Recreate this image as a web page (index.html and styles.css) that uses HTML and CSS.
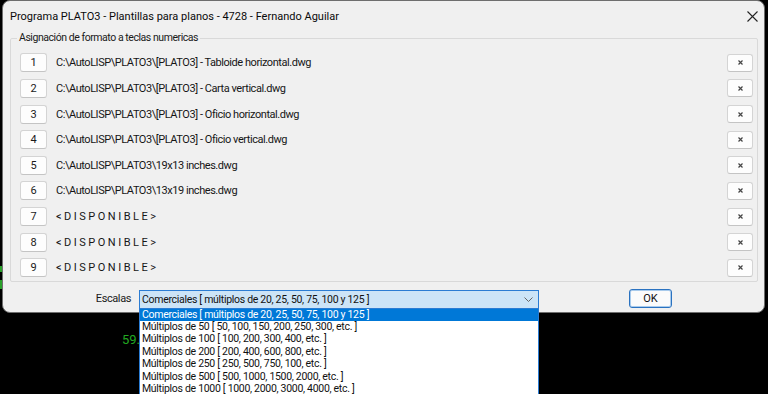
FILE: index.html
```html
<!DOCTYPE html>
<html lang="es">
<head>
<meta charset="utf-8">
<title>Programa PLATO3</title>
<link rel="stylesheet" href="styles.css">
</head>
<body>
<div class="term-bit term-bit-a"></div>
<div class="term-bit term-bit-b"></div>
<div class="term-text">59.</div>
<div class="dialog">
  <div class="titlebar">
    <span class="title">Programa PLATO3 - Plantillas para planos - 4728 - Fernando Aguilar</span>
    <svg class="close" width="11" height="11" viewBox="0 0 11 11"><path d="M0.5 0.5 L10.5 10.5 M10.5 0.5 L0.5 10.5" stroke="#222" stroke-width="1.1" fill="none"/></svg>
  </div>
  <fieldset class="group">
    <legend>Asignación de formato a teclas numericas</legend>
    <div class="rows">
      <div class="row"><span class="key">1</span><span class="path">C:\AutoLISP\PLATO3\[PLATO3] - Tabloide horizontal.dwg</span><span class="del"><svg width="5" height="5" viewBox="0 0 5 5"><path d="M0.5 0.5 L4.5 4.5 M4.5 0.5 L0.5 4.5" stroke="#444" stroke-width="1.2"/></svg></span></div>
      <div class="row"><span class="key">2</span><span class="path">C:\AutoLISP\PLATO3\[PLATO3] - Carta vertical.dwg</span><span class="del"><svg width="5" height="5" viewBox="0 0 5 5"><path d="M0.5 0.5 L4.5 4.5 M4.5 0.5 L0.5 4.5" stroke="#444" stroke-width="1.2"/></svg></span></div>
      <div class="row"><span class="key">3</span><span class="path">C:\AutoLISP\PLATO3\[PLATO3] - Oficio horizontal.dwg</span><span class="del"><svg width="5" height="5" viewBox="0 0 5 5"><path d="M0.5 0.5 L4.5 4.5 M4.5 0.5 L0.5 4.5" stroke="#444" stroke-width="1.2"/></svg></span></div>
      <div class="row"><span class="key">4</span><span class="path">C:\AutoLISP\PLATO3\[PLATO3] - Oficio vertical.dwg</span><span class="del"><svg width="5" height="5" viewBox="0 0 5 5"><path d="M0.5 0.5 L4.5 4.5 M4.5 0.5 L0.5 4.5" stroke="#444" stroke-width="1.2"/></svg></span></div>
      <div class="row"><span class="key">5</span><span class="path">C:\AutoLISP\PLATO3\19x13 inches.dwg</span><span class="del"><svg width="5" height="5" viewBox="0 0 5 5"><path d="M0.5 0.5 L4.5 4.5 M4.5 0.5 L0.5 4.5" stroke="#444" stroke-width="1.2"/></svg></span></div>
      <div class="row"><span class="key">6</span><span class="path">C:\AutoLISP\PLATO3\13x19 inches.dwg</span><span class="del"><svg width="5" height="5" viewBox="0 0 5 5"><path d="M0.5 0.5 L4.5 4.5 M4.5 0.5 L0.5 4.5" stroke="#444" stroke-width="1.2"/></svg></span></div>
      <div class="row"><span class="key">7</span><span class="path free">&lt;DISPONIBLE&gt;</span><span class="del"><svg width="5" height="5" viewBox="0 0 5 5"><path d="M0.5 0.5 L4.5 4.5 M4.5 0.5 L0.5 4.5" stroke="#444" stroke-width="1.2"/></svg></span></div>
      <div class="row"><span class="key">8</span><span class="path free">&lt;DISPONIBLE&gt;</span><span class="del"><svg width="5" height="5" viewBox="0 0 5 5"><path d="M0.5 0.5 L4.5 4.5 M4.5 0.5 L0.5 4.5" stroke="#444" stroke-width="1.2"/></svg></span></div>
      <div class="row"><span class="key">9</span><span class="path free">&lt;DISPONIBLE&gt;</span><span class="del"><svg width="5" height="5" viewBox="0 0 5 5"><path d="M0.5 0.5 L4.5 4.5 M4.5 0.5 L0.5 4.5" stroke="#444" stroke-width="1.2"/></svg></span></div>
    </div>
  </fieldset>
  <div class="footer">
    <span class="lbl">Escalas</span>
    <div class="combo">
      <div class="combo-box">
        <span class="combo-text">Comerciales [ múltiplos de 20, 25, 50, 75, 100 y 125 ]</span>
        <svg class="chev" width="9" height="5" viewBox="0 0 9 5"><path d="M0.5 0.5 L4.5 4.5 L8.5 0.5" stroke="#666" stroke-width="1" fill="none"/></svg>
      </div>
      <ul class="list">
        <li class="sel">Comerciales [ múltiplos de 20, 25, 50, 75, 100 y 125 ]</li>
        <li>Múltiplos de 50 [ 50, 100, 150, 200, 250, 300, etc. ]</li>
        <li>Múltiplos de 100 [ 100, 200, 300, 400, etc. ]</li>
        <li>Múltiplos de 200 [ 200, 400, 600, 800, etc. ]</li>
        <li>Múltiplos de 250 [ 250, 500, 750, 100, etc. ]</li>
        <li>Múltiplos de 500 [ 500, 1000, 1500, 2000, etc. ]</li>
        <li>Múltiplos de 1000 [ 1000, 2000, 3000, 4000, etc. ]</li>
      </ul>
    </div>
    <span class="ok">OK</span>
  </div>
</div>
</body>
</html>
```

FILE: styles.css
```css
* { box-sizing: border-box; }
html, body {
  margin: 0;
  padding: 0;
  width: 768px;
  height: 394px;
  overflow: hidden;
  background: #000;
  font-family: Roboto, "Liberation Sans", sans-serif;
  color: #1a1a1a;
}
body { position: relative; }

.term-text {
  position: absolute;
  left: 122px;
  top: 333px;
  font-size: 13px;
  line-height: 14px;
  color: #22a822;
}
.term-bit {
  position: absolute;
  left: 0;
  width: 2px;
  background: #2aa02a;
}
.term-bit-a { top: 266px; height: 6px; }
.term-bit-b { top: 280px; height: 9px; }

.dialog {
  position: relative;
  margin-left: 2px;
  width: 763px;
  height: 313px;
  background: #f0f0f0;
  border: 1px solid #6e6e6e;
  border-radius: 8px;
  display: flex;
  flex-direction: column;
}

.titlebar {
  height: 30px;
  display: flex;
  align-items: center;
  padding: 0 6px 0 7px;
}
.title {
  font-size: 11px;
  color: #0a0a0a;
  white-space: nowrap;
}
.close { margin-left: auto; display: block; }

.group {
  margin: 0 6px 0 7px;
  padding: 5px 4px 0 9px;
  border: 1px solid #d9d9d9;
  border-radius: 2px;
  min-width: 0;
}
.group legend {
  font-size: 10.5px;
  line-height: 14px;
  letter-spacing: -0.45px;
  padding: 0 2px;
  margin-left: -3px;
  color: #1a1a1a;
}
.rows {
  display: grid;
  grid-auto-rows: 25.625px;
}
.row {
  display: grid;
  grid-template-columns: 27px 1fr 26px;
  column-gap: 9px;
  align-items: center;
}
.key {
  height: 19px;
  background: #fdfdfd;
  border: 1px solid #d4d4d4;
  border-bottom-color: #c4c4c4;
  border-radius: 3px;
  font-size: 11px;
  line-height: 17px;
  text-align: center;
  color: #1a1a1a;
}
.path {
  font-size: 11px;
  letter-spacing: -0.45px;
  white-space: nowrap;
  color: #161616;
}
.path.free { letter-spacing: 2.5px; }
.del {
  height: 18px;
  background: #fdfdfd;
  border: 1px solid #d4d4d4;
  border-bottom-color: #c4c4c4;
  border-radius: 3px;
  display: flex;
  align-items: center;
  justify-content: center;
}
.del svg { display: block; }

.footer {
  display: flex;
  align-items: flex-start;
  margin-top: 7px;
  height: 19px;
}
.lbl {
  width: 128px;
  margin-right: 8px;
  text-align: right;
  font-size: 11px;
  letter-spacing: -0.4px;
  line-height: 19px;
  color: #1a1a1a;
}
.combo {
  position: relative;
  width: 400px;
  margin-top: 1px;
}
.combo-box {
  height: 19px;
  border: 1px solid #2b7cd3;
  background: #cce4f7;
  display: flex;
  align-items: center;
  padding: 0 5px 0 2px;
}
.combo-text {
  font-size: 10.5px;
  letter-spacing: -0.3px;
  white-space: nowrap;
  color: #111;
}
.chev { margin-left: auto; display: block; }

.list {
  position: absolute;
  top: 100%;
  left: 0;
  width: 400px;
  margin: 0;
  padding: 0;
  list-style: none;
  background: #fff;
  border: 1px solid #2b7cd3;
  border-top: none;
  z-index: 2;
}
.list li {
  font-size: 10.5px;
  letter-spacing: -0.3px;
  line-height: 12.4px;
  height: 12.4px;
  padding-left: 2px;
  white-space: nowrap;
  color: #111;
}
.list li.sel {
  background: #0078d7;
  color: #fff;
}

.ok {
  margin-left: 90px;
  width: 43px;
  height: 19px;
  border: 1px solid #2a72c0;
  box-shadow: inset 0 0 0 1px #a9cbec;
  border-radius: 3px;
  background: #fbfbfb;
  font-size: 11px;
  line-height: 17px;
  text-align: center;
  color: #111;
}
```
